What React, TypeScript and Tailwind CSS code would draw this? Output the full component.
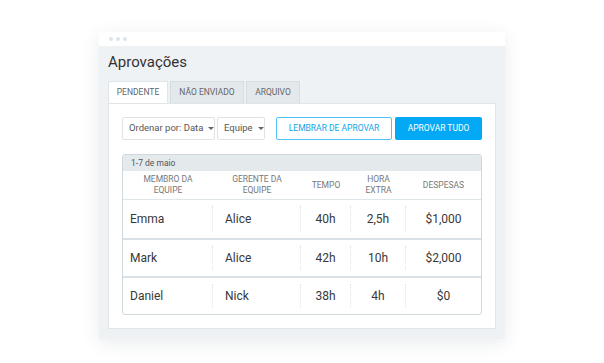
import React from 'react';

const rows = [
  { member: 'Emma', manager: 'Alice', time: '40h', extra: '2,5h', cost: '$1,000' },
  { member: 'Mark', manager: 'Alice', time: '42h', extra: '10h', cost: '$2,000' },
  { member: 'Daniel', manager: 'Nick', time: '38h', extra: '4h', cost: '$0' },
];

const cols = 'grid grid-cols-[90px_88px_50px_55px_1fr]';

function Caret() {
  return <span className="ml-[5px] shrink-0 inline-block w-0 h-0 border-l-[3px] border-r-[3px] border-t-[3px] border-l-transparent border-r-transparent border-t-[#666]" />;
}

export default function App() {
  return (
    <div className="w-[604px] h-[363px] bg-white font-['Roboto',sans-serif] pt-[32px] pl-[99px]">
      <div className="w-[406px] h-[307px] rounded-t-[3px] shadow-[0_4px_18px_rgba(40,60,80,0.10)] flex flex-col overflow-hidden">
        {/* title bar */}
        <div className="h-[14px] bg-white flex items-center gap-[3px] pl-[10px] shrink-0">
          <span className="w-[4px] h-[4px] rounded-full bg-[#dde3e8]" />
          <span className="w-[4px] h-[4px] rounded-full bg-[#dde3e8]" />
          <span className="w-[4px] h-[4px] rounded-full bg-[#dde3e8]" />
        </div>

        <div className="flex-1 bg-[#eef2f5] px-[9px] pb-[10px] flex flex-col">
          <h1 className="pt-[7px] text-[15px] leading-[18px] text-[#333]">Aprovações</h1>

          <div className="mt-[10px] flex gap-[2px] h-[22px] text-[8.5px] uppercase text-[#666]">
            <div className="w-[60px] bg-white border border-b-0 border-[#dfe5e9] flex items-center justify-center">Pendente</div>
            <div className="w-[74px] bg-[#e3e8eb] border border-b-0 border-[#d6dde1] flex items-center justify-center">Não enviado</div>
            <div className="w-[54px] bg-[#e3e8eb] border border-b-0 border-[#d6dde1] flex items-center justify-center">Arquivo</div>
          </div>

          <div className="flex-1 bg-white border border-[#dfe5e9] pt-[13px] px-[13px] flex flex-col">
            <div className="flex h-[23px]">
              <div className="w-[93px] border border-[#dde3e7] rounded-[2px] flex items-center pl-[6px] text-[9.5px] text-[#555] whitespace-nowrap">
                Ordenar por: Data<Caret />
              </div>
              <div className="ml-[2px] w-[48px] border border-[#dde3e7] rounded-[2px] flex items-center pl-[6px] text-[9.5px] text-[#555] whitespace-nowrap">
                Equipe<Caret />
              </div>
              <div className="ml-auto w-[116px] border border-[#4fc3f7] rounded-[2px] flex items-center justify-center text-[8.5px] uppercase text-[#0ea5e9]">
                Lembrar de aprovar
              </div>
              <div className="ml-[3px] w-[87px] bg-[#03a9f4] rounded-[2px] flex items-center justify-center text-[8.5px] uppercase text-white">
                Aprovar tudo
              </div>
            </div>

            <div className="mt-[14px] border border-[#cfd8dd] rounded-[3px] overflow-hidden">
              <div className="h-[16px] bg-[#e4e9ec] flex items-center pl-[8px] text-[8.5px] text-[#555]">1-7 de maio</div>
              <div className={`${cols} h-[29px] items-center text-center text-[8.5px] leading-[11px] uppercase text-[#777] border-b border-[#dfe6ea]`}>
                <div>Membro da<br />equipe</div>
                <div>Gerente da<br />equipe</div>
                <div>Tempo</div>
                <div>Hora<br />extra</div>
                <div>Despesas</div>
              </div>
              {rows.map((r, i) => (
                <div key={r.member} className={`${cols} h-[38px] py-[6px] text-[12px] text-[#383838] ${i > 0 ? 'border-t-2 border-[#d9e1e6]' : ''}`}>
                  <div className="flex items-center pl-[7px] border-r border-dotted border-[#dfe4e7]">{r.member}</div>
                  <div className="flex items-center pl-[12px] border-r border-dotted border-[#dfe4e7]">{r.manager}</div>
                  <div className="flex items-center justify-center border-r border-dotted border-[#dfe4e7]">{r.time}</div>
                  <div className="flex items-center justify-center border-r border-dotted border-[#dfe4e7]">{r.extra}</div>
                  <div className="flex items-center justify-center">{r.cost}</div>
                </div>
              ))}
            </div>
          </div>
        </div>
      </div>
    </div>
  );
}
